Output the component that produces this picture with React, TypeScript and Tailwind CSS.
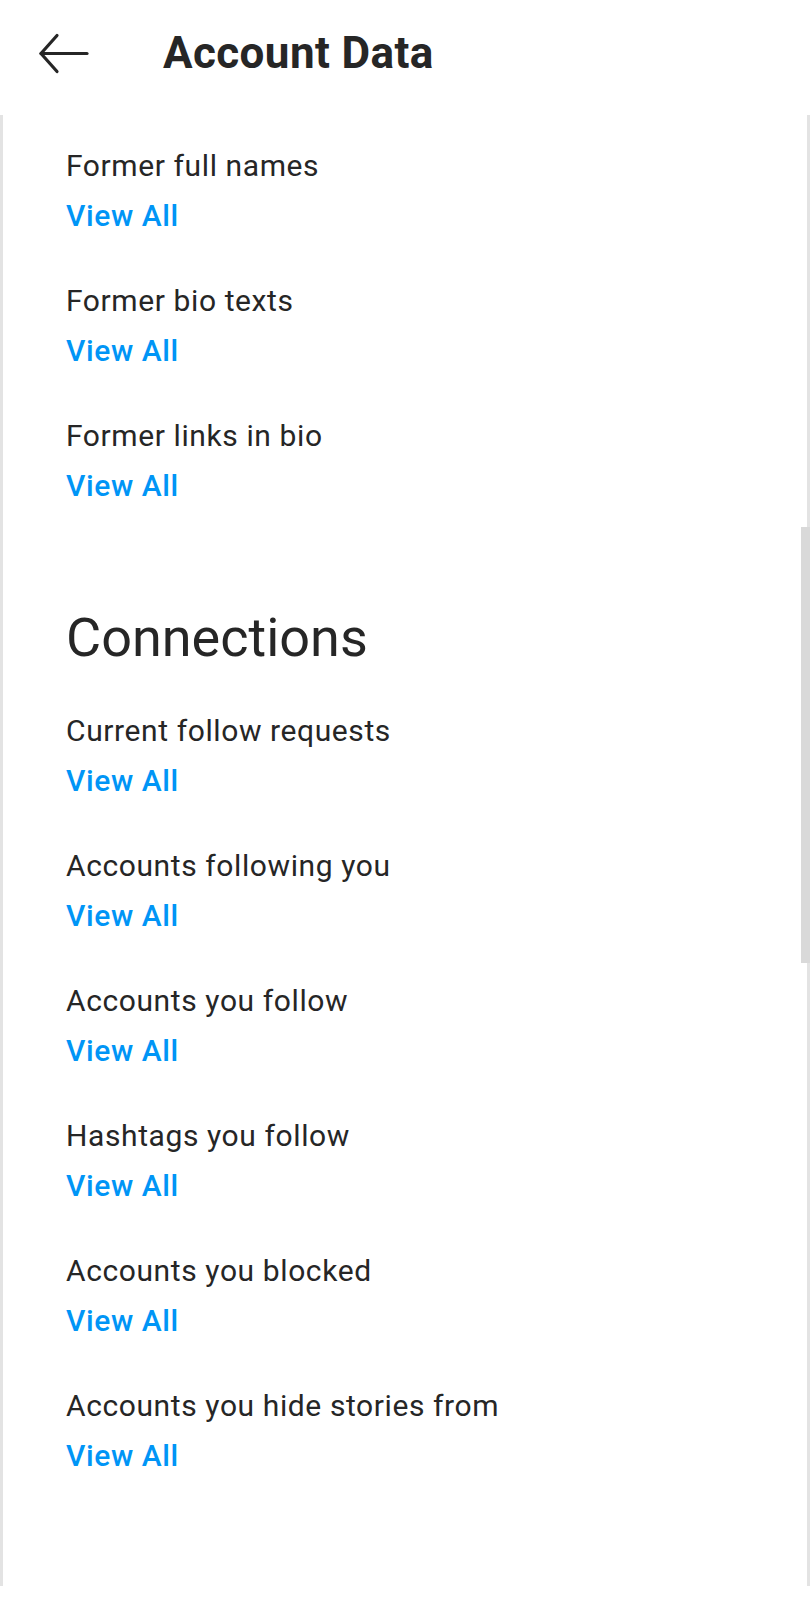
import React from 'react';

const accountItems = ['Former full names', 'Former bio texts', 'Former links in bio'];
const connectionItems = [
  'Current follow requests',
  'Accounts following you',
  'Accounts you follow',
  'Hashtags you follow',
  'Accounts you blocked',
  'Accounts you hide stories from',
];

function Item({ label }: { label: string }) {
  return (
    <div className="flex flex-col">
      <div className="text-[30px] leading-[36px] tracking-[0.6px] text-[#262626]">{label}</div>
      <div className="mt-[14px] text-[30px] leading-[36px] tracking-[0.6px] font-medium text-[#0095f6]">View All</div>
    </div>
  );
}

export default function App() {
  return (
    <div className="w-[810px] h-[1600px] bg-white font-['Roboto',sans-serif] flex flex-col overflow-hidden">
      {/* Header */}
      <header className="h-[115px] shrink-0 flex items-center pb-[9px]">
        <button className="ml-[37px] w-[52px] h-[42px] flex items-center justify-center text-[#262626]">
          <svg width="51" height="41" viewBox="0 0 51 41" fill="none" stroke="currentColor" strokeWidth="3.2" strokeLinecap="round" strokeLinejoin="round">
            <path d="M49 20.5H3" />
            <path d="M19 2.5L3 20.5L19 38.5" />
          </svg>
        </button>
        <h1 className="ml-[74px] text-[44px] leading-[52px] tracking-[0.4px] font-bold text-[#262626]">Account Data</h1>
      </header>

      {/* Scroll area */}
      <div className="relative h-[1471px] shrink-0 border-l-[3px] border-r-[3px] border-[#e3e3e3] pl-[63px] pt-[33px]">
        <div className="flex flex-col gap-[49px]">
          {accountItems.map((l) => (
            <Item key={l} label={l} />
          ))}
        </div>

        <h2 className="mt-[103px] text-[54px] leading-[62px] text-[#262626]">Connections</h2>

        <div className="mt-[44px] flex flex-col gap-[49px]">
          {connectionItems.map((l) => (
            <Item key={l} label={l} />
          ))}
        </div>

        {/* scrollbar thumb */}
        <div className="absolute right-[-3px] top-[412px] w-[9px] h-[436px] bg-[#d9d9d9]" />
      </div>
    </div>
  );
}
